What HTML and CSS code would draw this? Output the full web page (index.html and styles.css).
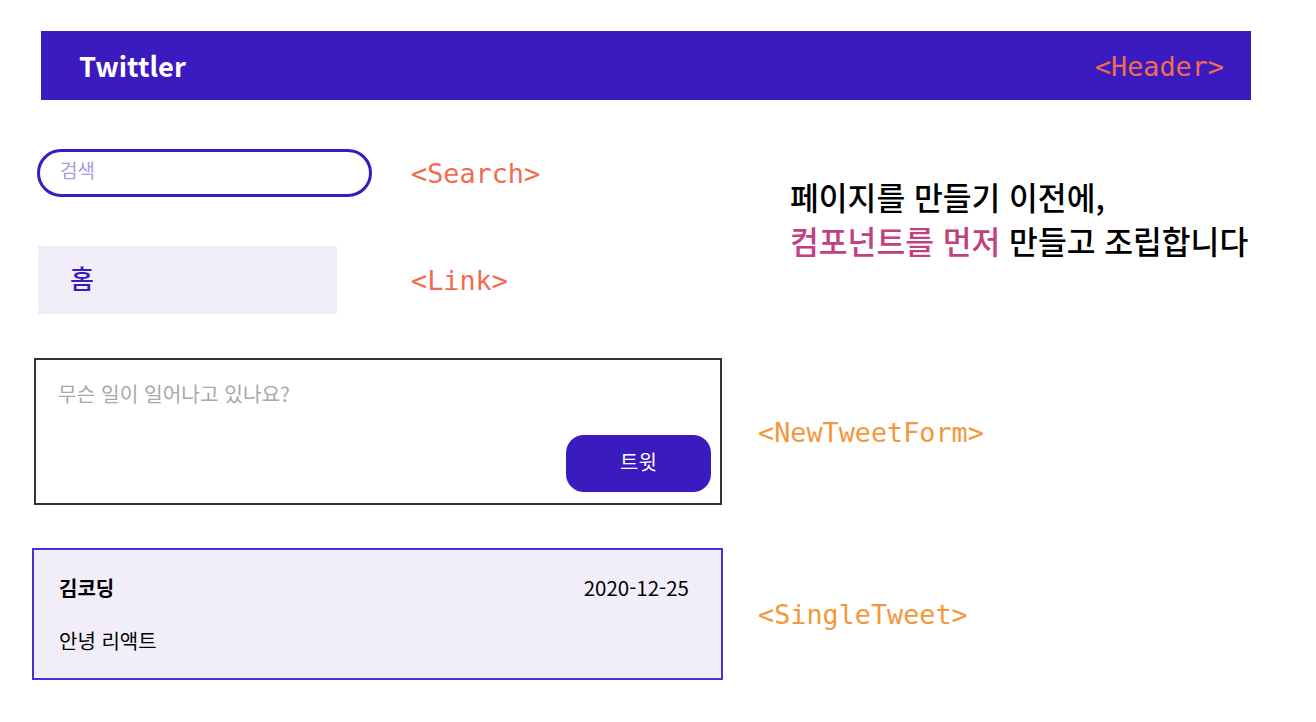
FILE: index.html
```html
<!DOCTYPE html>
<html lang="ko">
<head>
<meta charset="utf-8">
<title>Twittler components</title>
<link rel="stylesheet" href="styles.css">
</head>
<body>
  <header class="header">
    <div class="brand">Twittler</div>
    <div class="tag tag-red">&lt;Header&gt;</div>
  </header>

  <section class="top">
    <div class="top-left">
      <div class="row row-search">
        <div class="search"><span class="search-ph">검색</span></div>
        <div class="tag tag-red">&lt;Search&gt;</div>
      </div>
      <div class="row row-link">
        <div class="link"><span class="link-text">홈</span></div>
        <div class="tag tag-red">&lt;Link&gt;</div>
      </div>
    </div>
    <div class="note">
      <p>페이지를 만들기 이전에,</p>
      <p><span class="accent">컴포넌트를 먼저</span> 만들고 조립합니다</p>
    </div>
  </section>

  <div class="row row-form">
    <div class="form">
      <div class="form-ph">무슨 일이 일어나고 있나요?</div>
      <div class="form-actions"><button class="btn">트윗</button></div>
    </div>
    <div class="tag tag-orange">&lt;NewTweetForm&gt;</div>
  </div>

  <div class="row row-tweet">
    <div class="tweet">
      <div class="tweet-head">
        <span class="tweet-name">김코딩</span>
        <span class="tweet-date">2020-12-25</span>
      </div>
      <div class="tweet-body">안녕 리액트</div>
    </div>
    <div class="tag tag-orange">&lt;SingleTweet&gt;</div>
  </div>
</body>
</html>
```

FILE: styles.css
```css
* { box-sizing: border-box; }
html, body { margin: 0; padding: 0; background: #ffffff; }
body {
  width: 1316px;
  height: 722px;
  overflow: hidden;
  font-family: "Noto Sans CJK KR", "Noto Sans", sans-serif;
  color: #111;
}
p { margin: 0; }

.tag {
  font-family: "DejaVu Sans Mono", monospace;
  font-size: 26.8px;
  line-height: 1;
  white-space: nowrap;
  padding-top: 3px;
}
.tag-red { color: #f26b50; }
.tag-orange { color: #f3983a; }

.header {
  margin: 31px 65px 0 41px;
  height: 69px;
  background: #391bc0;
  display: flex;
  align-items: center;
  justify-content: space-between;
  padding: 0 27px 0 38px;
}
.brand {
  color: #fff;
  font-weight: 700;
  font-size: 27.3px;
  line-height: 1;
  padding-top: 1px;
}

.top {
  display: flex;
  margin-top: 49px;
}
.top-left { width: 790px; }

.row {
  display: flex;
  align-items: center;
}

.row-search { padding-left: 37px; height: 48px; }
.search {
  width: 335px;
  height: 48px;
  border: 3px solid #391bc0;
  border-radius: 24px;
  padding-left: 20px;
  display: flex;
  align-items: center;
}
.search-ph {
  color: #a99ae4;
  font-size: 19px;
  line-height: 1;
  margin-top: -8px;
}
.row-search .tag { margin-left: 39px; }

.row-link { padding-left: 38px; margin-top: 49px; }
.link {
  width: 299px;
  height: 68px;
  background: #f1eefa;
  padding-left: 32px;
  display: flex;
  align-items: center;
}
.link-text {
  color: #391bc0;
  font-size: 26px;
  font-weight: 500;
  line-height: 1;
  margin-top: -5px;
}
.row-link .tag { margin-left: 74px; }

.note {
  margin-top: 26px;
  font-size: 31.3px;
  line-height: 44px;
  color: #000;
  font-weight: 500;
  white-space: nowrap;
}
.accent { color: #c2407f; }

.row-form { padding-left: 34px; margin-top: 44px; }
.form {
  width: 688px;
  height: 147px;
  border: 2px solid #333;
  padding: 19px 9px 11px 22px;
  display: flex;
  flex-direction: column;
  justify-content: space-between;
}
.form-ph {
  color: #a8a8a8;
  font-size: 20.3px;
  line-height: 28px;
}
.form-actions { display: flex; justify-content: flex-end; }
.btn {
  width: 145px;
  height: 57px;
  border: none;
  border-radius: 18px;
  background: #391bc0;
  color: #fff;
  font-family: "Noto Sans CJK KR", sans-serif;
  font-size: 20px;
  padding: 0 0 4px;
}
.row-form .tag { margin-left: 36px; }

.row-tweet { padding-left: 32px; margin-top: 43px; }
.tweet {
  width: 691px;
  height: 132px;
  border: 2px solid #4a30d2;
  background: #f1eefa;
  padding: 22px 32px 0 25px;
}
.tweet-head {
  display: flex;
  justify-content: space-between;
  align-items: center;
  height: 30px;
}
.tweet-name { font-weight: 700; font-size: 20px; color: #000; }
.tweet-date { font-size: 20.5px; color: #000; }
.tweet-body {
  margin-top: 24px;
  font-size: 20px;
  line-height: 30px;
  color: #000;
}
.row-tweet .tag { margin-left: 35px; }
```
